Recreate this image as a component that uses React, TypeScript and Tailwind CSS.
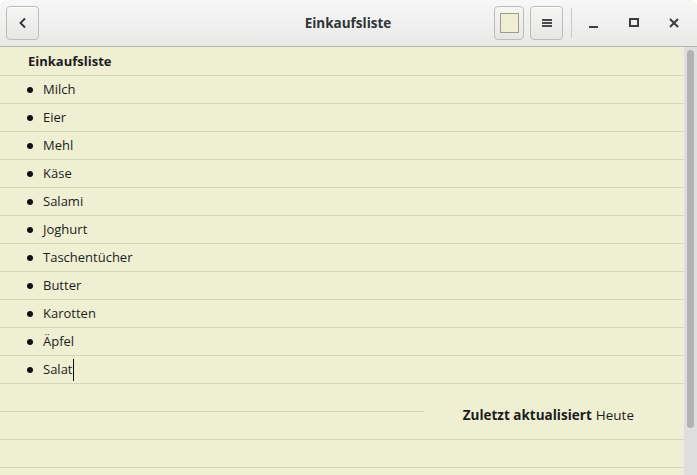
import React from 'react';

const items = [
  'Milch',
  'Eier',
  'Mehl',
  'Käse',
  'Salami',
  'Joghurt',
  'Taschentücher',
  'Butter',
  'Karotten',
  'Äpfel',
  'Salat',
];

const font = { fontFamily: '"Open Sans", "DejaVu Sans", sans-serif' };

function HeaderButton({ children }: { children: React.ReactNode }) {
  return (
    <div className="flex h-[34px] w-[33px] items-center justify-center rounded-[4px] border border-[#bcbcb9] bg-gradient-to-b from-[#f6f6f5] to-[#e6e6e4] shadow-[inset_0_1px_0_#ffffff]">
      {children}
    </div>
  );
}

export default function App() {
  return (
    <div className="flex h-[475px] w-[697px] flex-col overflow-hidden rounded-t-[7px] bg-[#eff0d3] text-[13px] text-[#1c1c1c]" style={font}>
      {/* header bar */}
      <div className="grid h-[47px] shrink-0 grid-cols-[1fr_auto_1fr] items-center border-b border-[#b3b3b0] bg-gradient-to-b from-[#f7f7f7] to-[#e9e9e8] pl-[6px] pr-[3px]">
        <div className="flex">
          <HeaderButton>
            <svg width="16" height="16" viewBox="0 0 16 16">
              <path d="M10 3.5 L5.5 8 L10 12.5" fill="none" stroke="#2e3436" strokeWidth="1.8" />
            </svg>
          </HeaderButton>
        </div>
        <div className="pr-[4px] text-center text-[13.5px] font-bold text-[#2e3436]">Einkaufsliste</div>
        <div className="flex items-center justify-end">
          <div className="flex items-center gap-[6px]">
            <div className="flex h-[34px] w-[30px] items-center justify-center rounded-[4px] border border-[#bcbcb9] bg-gradient-to-b from-[#f6f6f5] to-[#e6e6e4]">
              <div className="h-[20px] w-[19px] border border-[#9c9d88] bg-[#eff0d3]" />
            </div>
            <HeaderButton>
              <svg width="16" height="16" viewBox="0 0 16 16">
                <rect x="3" y="4" width="10" height="2" fill="#474b4c" />
                <rect x="3" y="7" width="10" height="2" fill="#474b4c" />
                <rect x="3" y="10" width="10" height="2" fill="#474b4c" />
              </svg>
            </HeaderButton>
            <div className="ml-[2px] h-[30px] w-px bg-[#c9c9c7]" />
          </div>
          <div className="flex items-center pl-[2px]">
            <div className="flex h-[34px] w-[40px] items-center justify-center">
              <svg width="12" height="12" viewBox="0 0 12 12">
                <rect x="1" y="9" width="9" height="2" fill="#3b3e3f" />
              </svg>
            </div>
            <div className="flex h-[34px] w-[40px] items-center justify-center">
              <svg width="12" height="12" viewBox="0 0 12 12">
                <rect x="2" y="2" width="8" height="7" fill="none" stroke="#3b3e3f" strokeWidth="2" />
              </svg>
            </div>
            <div className="flex h-[34px] w-[40px] items-center justify-center">
              <svg width="12" height="12" viewBox="0 0 12 12">
                <path d="M2 2 L10 10 M10 2 L2 10" stroke="#3b3e3f" strokeWidth="2" />
              </svg>
            </div>
          </div>
        </div>
      </div>

      {/* content */}
      <div className="flex min-h-0 flex-1">
        <div className="relative flex-1 overflow-hidden pt-px">
          <div className="flex h-[28px] items-center border-b border-[#d6d8bb] pl-[28px] font-bold">
            Einkaufsliste
          </div>
          {items.map((item, i) => (
            <div key={item} className="flex h-[28px] items-center border-b border-[#d6d8bb] pl-[27px]">
              <span className="mr-[10px] h-[6px] w-[6px] rounded-full bg-[#111]" />
              <span>{item}</span>
              {i === items.length - 1 && <span className="h-[22px] w-px bg-[#111]" />}
            </div>
          ))}
          {[0, 1, 2, 3].map((r) => (
            <div key={r} className="h-[28px] border-b border-[#d6d8bb]" />
          ))}
          <div className="absolute right-0 top-[344px] flex h-[48px] w-[260px] items-center justify-end bg-[#eff0d3] pr-[50px] text-[13.5px]">
            <span className="font-bold">Zuletzt aktualisiert</span>
            <span className="ml-[4px]">Heute</span>
          </div>
        </div>
        {/* scrollbar */}
        <div className="w-[13px] shrink-0 bg-[#dedede] px-[3px] pt-[3px]">
          <div className="h-[378px] rounded-full bg-[#b2b2b4]" />
        </div>
      </div>
    </div>
  );
}
